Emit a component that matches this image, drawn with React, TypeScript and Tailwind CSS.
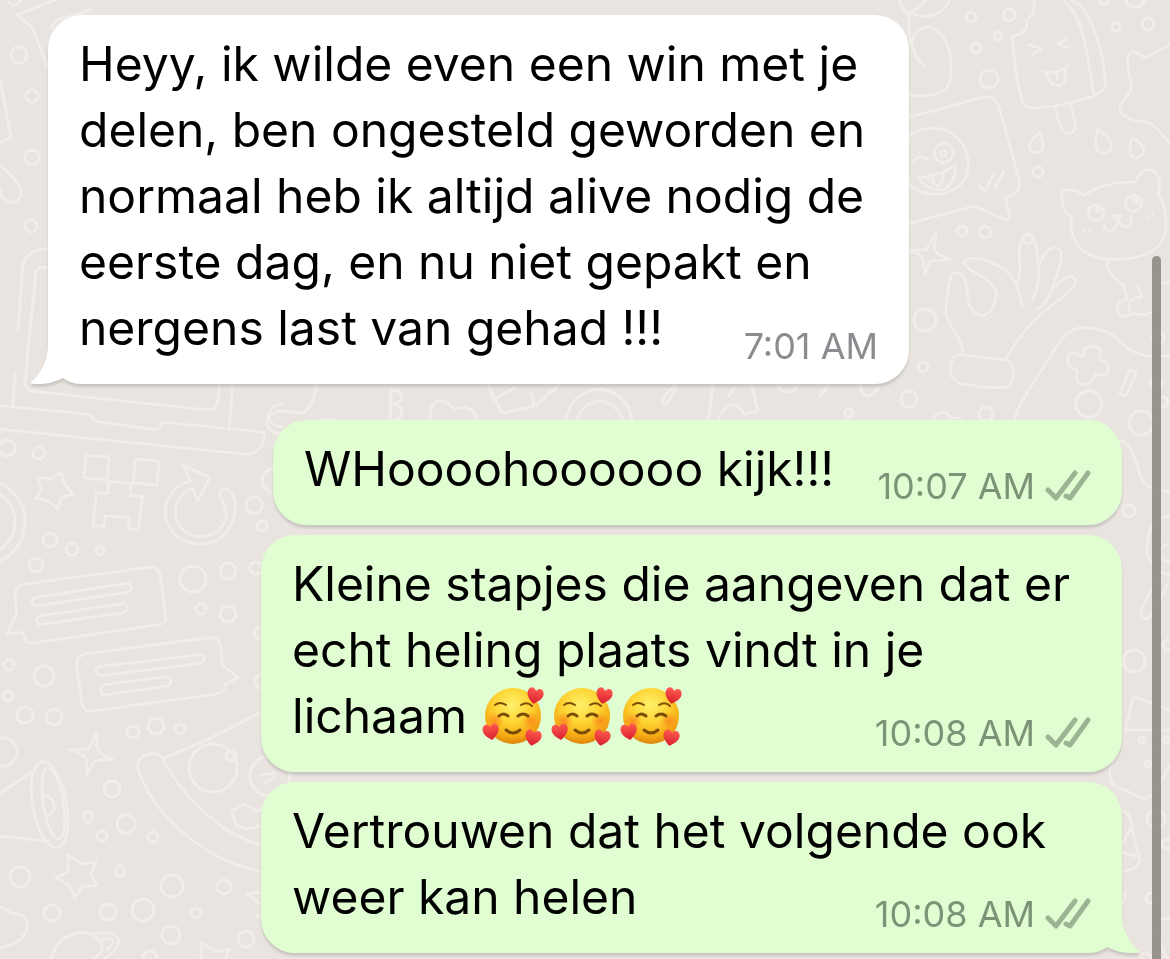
import React from 'react';

type Status = 'sent' | 'received';

interface Message {
  id: number;
  lines: string[];
  time: string;
  status: Status;
  emojis?: number;
  short?: boolean;
  tail?: boolean;
}

const received: Message[] = [
  {
    id: 1,
    lines: [
      'Heyy, ik wilde even een win met je',
      'delen, ben ongesteld geworden en',
      'normaal heb ik altijd alive nodig de',
      'eerste dag, en nu niet gepakt en',
      'nergens last van gehad !!!',
    ],
    time: '7:01 AM',
    status: 'received',
    tail: true,
  },
];

const sent: Message[] = [
  { id: 2, lines: ['WHoooohoooooo kijk!!!'], time: '10:07 AM', status: 'sent', short: true },
  {
    id: 3,
    lines: ['Kleine stapjes die aangeven dat er', 'echt heling plaats vindt in je', 'lichaam'],
    time: '10:08 AM',
    status: 'sent',
    emojis: 3,
  },
  {
    id: 4,
    lines: ['Vertrouwen dat het volgende ook', 'weer kan helen'],
    time: '10:08 AM',
    status: 'sent',
    tail: true,
  },
];

// x, y, radius
const dots = [
  [971, 17, 5], [1009, 15, 6], [998, 36, 4], [976, 48, 5], [989, 79, 9], [1116, 27, 4], [1148, 24, 6],
  [1038, 172, 5], [962, 231, 5], [985, 232, 6], [1104, -2, 6], [1135, -3, 10], [1028, 239, 5],
  [925, 320, 11], [923, 367, 5], [909, 399, 8], [986, 414, 7], [1089, 404, 13], [1141, 423, 12],
  [1158, 338, 6], [1156, 383, 6], [1163, 402, 5], [7, 448, 8], [39, 453, 6], [50, 540, 7], [72, 549, 6],
  [100, 551, 4], [36, 565, 7], [254, 505, 8], [262, 526, 5], [193, 579, 13], [228, 571, 8], [256, 568, 6],
  [201, 609, 5], [228, 614, 8], [9, 665, 5], [44, 676, 10], [8, 696, 5], [25, 715, 8], [54, 717, 8],
  [133, 732, 6], [156, 726, 8], [180, 729, 5], [260, 633, 6], [262, 682, 7], [3, 752, 14], [112, 789, 8],
  [88, 817, 5], [126, 824, 9], [102, 836, 5], [153, 837, 5], [20, 877, 10], [120, 871, 5], [172, 886, 11],
  [224, 887, 7], [52, 913, 8], [108, 912, 8], [143, 910, 11], [196, 913, 5], [171, 935, 9], [246, 939, 8],
  [150, 958, 7], [213, 768, 24], [231, 756, 5], [270, 776, 20], [19, 55, 8], [32, 96, 6], [32, 157, 7],
  [31, 226, 6], [14, -1, 6], [1156, 819, 9], [1167, 844, 5], [1151, 898, 5], [1146, 958, 5], [1129, 511, 6],
  [1134, 661, 11], [1168, 645, 5], [1142, 740, 3], [1148, 764, 3], [1156, 747, 3], [1166, 740, 3],
  [-18, 522, 43], [-18, 522, 33],
];

const Wallpaper: React.FC = () => (
  <svg
    aria-hidden="true"
    className="absolute left-0 top-0 pointer-events-none"
    width="1170"
    height="959"
    viewBox="0 0 1170 959"
    fill="none"
    stroke="#f1ede9"
    strokeWidth="3"
    strokeLinecap="round"
    strokeLinejoin="round"
  >
    {dots.map(([x, y, r]) => (
      <circle key={`${x}-${y}-${r}`} cx={x} cy={y} r={r} />
    ))}

    {/* ice lolly, phone, droplets, cat */}
    <g transform="translate(900 0) scale(0.33333)" strokeWidth="8">
      <path d="M20 40 C5 20 -5 0 -5 -10 M20 40 C50 30 75 10 82 -5 M35 38 C70 60 130 50 152 -5 M28 42 C22 80 30 170 76 200" />
      <path d="M35 130 C45 75 95 70 125 105 C155 145 155 190 152 235 C145 285 90 292 20 285" />
      <path d="M400 -5 C407 25 402 50 378 60 C388 80 372 105 338 108 C340 180 352 250 365 300 C370 320 385 324 400 324 L465 318 C510 308 550 300 580 288 C610 276 620 262 615 235 C608 150 580 60 540 15 L500 -8 M485 -5 C530 30 545 85 555 135 C568 190 574 240 580 278" />
      <path d="M465 320 C472 350 477 372 485 388 C495 405 525 405 526 380 C524 355 518 335 512 314" />
      <path d="M388 134 L424 148 L396 164 M500 116 L474 132 L504 142 M430 214 C455 220 485 215 504 198 M441 218 C445 245 458 258 475 257 C495 255 500 230 494 208 M469 219 L472 236" />
      <path d="M420 396 C400 415 387 425 388 442 C395 465 430 460 430 440 Z M593 388 C588 410 584 425 588 445 C598 468 635 462 635 435 C632 415 610 398 593 388 Z M696 414 C690 435 684 455 695 468 C710 482 735 468 731 450 C726 432 710 420 696 414 Z" />
      <path d="M20 354 L240 294 C270 285 285 292 295 315 L358 540 C362 570 345 585 315 592 L330 650 C325 662 320 662 310 658 L224 618 L20 672" />
      <path d="M20 415 C60 375 130 375 170 410 C220 460 215 535 165 567 C120 592 60 590 20 545 M40 492 C45 470 65 465 82 478 M55 535 C95 530 135 515 167 498 C170 530 150 568 118 570 C90 568 70 555 55 535 Z M82 532 L98 546 M98 530 C102 570 130 565 130 518 M236 558 L256 572 L282 522 M285 566 L310 515" />
      <circle cx="131" cy="459" r="28" />
      <circle cx="131" cy="459" r="8" />
      <path d="M815 130 L740 172 C715 170 710 150 690 157 C675 175 685 210 693 245 C700 285 665 290 659 325 C670 365 715 360 750 370 C780 385 795 415 815 440" />
      <path d="M515 650 C485 635 480 590 490 573 C510 565 535 572 553 586 C590 560 645 545 706 546 C720 510 745 500 765 515 C785 535 780 560 774 585 C800 615 805 680 790 715 C765 775 680 780 620 778 C540 770 505 715 515 650" />
      <circle cx="588" cy="638" r="23" />
      <circle cx="701" cy="610" r="24" />
      <circle cx="594" cy="630" r="6" />
      <circle cx="706" cy="603" r="6" />
      <path d="M638 650 L664 644 L653 662 Z M653 662 C650 700 615 700 612 676 M655 662 C670 695 705 675 694 648 M549 693 L552 693 M570 693 L572 693 M740 655 L742 655 M756 643 L758 643" />
    </g>

    {/* sparkle, ok hand, cuff, gamepad */}
    <g transform="translate(900 220) scale(0.33333)" strokeWidth="8">
      <path d="M108 38 L102 90 C115 108 135 112 154 119 L98 122 C85 130 80 145 75 162 L68 115 C60 100 48 100 30 92 L80 88 Z M20 14 L80 -4" />
      <path d="M190 402 C180 335 145 325 138 280 C138 240 145 195 155 163 C170 152 190 160 198 188 C205 225 200 255 222 275 C245 298 275 280 283 250 C292 225 293 210 275 195 C250 160 205 160 192 128 C200 105 250 115 290 135 C345 160 355 205 366 255" />
      <path d="M348 195 C372 160 350 110 362 65 C375 35 402 42 408 75 C420 140 420 190 398 240 M415 135 C440 85 460 70 482 92 C490 130 470 160 455 208 C440 245 430 255 412 270 M455 208 C490 175 515 155 528 180 C525 210 480 235 430 275 C385 320 350 355 320 415" />
      <path d="M180 404 L320 420 C350 435 340 475 330 500 C285 508 230 500 180 490 C140 470 150 445 157 420 C160 408 170 404 180 404 Z" />
      <path d="M345 600 C350 550 410 480 450 410 C485 350 510 322 550 323 C600 325 635 335 660 365 C700 405 750 418 815 405 M100 595 C115 570 145 575 150 595 C165 590 175 592 185 600" />
      <path d="M555 388 C570 370 600 380 604 395 L598 420 C630 425 632 445 618 465 L585 463 C578 500 540 500 530 480 L532 450 C505 445 495 430 508 400 C525 395 540 405 550 408 Z" />
      <path d="M690 450 L709 456 L678 528 L659 520 Z M620 120 C622 160 650 185 670 195 L682 240 M712 192 L724 232 C685 230 680 265 695 280 C725 287 760 285 772 260 C780 230 770 200 768 165 M682 238 C645 240 640 285 675 290 L695 284 M780 190 L815 185" />
    </g>

    {/* laptop base, star, creeper, reload arrow */}
    <g transform="translate(0 380) scale(0.33333)" strokeWidth="8">
      <path d="M75 -20 C72 20 80 33 100 34 L625 90 C650 92 655 70 658 20 M-5 76 L275 104 C280 125 290 127 310 128 L460 148 C480 150 482 145 484 126 L794 157 C794 195 775 225 730 222 L-5 147 M38 75 L46 -20 M698 20 L688 142" />
      <path d="M185 278 L192 312 L220 342 L185 352 L173 386 L145 362 L108 354 L124 328 L114 293 L150 297 Z" />
      <path d="M258 227 L327 230 L322 300 L250 293 Z M406 237 L478 244 L470 316 L400 308 Z M327 304 L393 311 L390 346 L428 350 L415 448 L383 446 L388 413 L315 408 L312 440 L278 437 L290 338 L322 341 Z" />
      <path d="M571 302 C510 320 480 380 503 430 C530 500 635 515 680 455 C715 405 712 360 690 335 C675 320 655 330 660 350 C685 390 685 425 655 450 C615 485 550 470 532 425 C515 380 535 340 578 325 L592 364 L630 293 L550 256 Z" />
      <path d="M845 72 C810 75 795 110 810 125 C820 135 830 140 845 140 M845 262 C810 262 780 280 788 310 C795 335 820 340 845 345" />
    </g>

    {/* chat boxes */}
    <g transform="translate(0 560) scale(0.33333)" strokeWidth="8">
      <path d="M75 72 L445 22 C465 18 475 25 480 45 L497 165 C500 185 490 192 475 194 L95 250 C75 250 75 235 70 218 L22 220 L50 162 L45 110 C45 85 55 75 75 72 Z" />
      <path d="M108 112 L380 70 C398 70 398 92 380 97 L108 138 C92 138 92 115 108 112 Z M120 168 L370 130 C386 132 385 155 370 158 L120 194 C107 190 108 171 120 168 Z" />
      <path d="M265 280 L635 232 C655 230 665 250 667 315 L715 353 L675 373 C675 390 665 400 650 402 L270 454 C250 455 245 435 242 400 L230 315 C230 290 245 283 265 280 Z" />
      <path d="M298 320 L600 284 C618 287 615 305 600 310 L300 347 C284 343 285 324 298 320 Z M310 375 L500 350 C518 352 515 375 500 378 L312 405 C298 400 300 380 310 375 Z" />
    </g>

    {/* megaphone, sparkle, pizza slice, star, planet */}
    <g transform="translate(0 740) scale(0.33333)" strokeWidth="8">
      <path d="M290 -22 L290 22 C300 45 320 50 338 57 L290 62 C275 70 268 85 262 105 L258 55 C245 40 228 35 210 28 L265 28 Z" />
      <ellipse cx="149" cy="194" rx="51" ry="131" transform="rotate(-10 149 194)" />
      <ellipse cx="160" cy="190" rx="30" ry="108" transform="rotate(-9 160 190)" />
      <path d="M-5 162 L95 98 M-5 288 L145 304 M135 168 C170 170 172 220 140 225" />
      <path d="M415 90 C400 45 470 25 488 55 C535 150 650 280 785 316 M415 90 C455 210 600 360 785 395 M490 55 L620 0 L785 -85" />
      <path d="M788 205 C765 225 760 200 730 193 C715 198 715 212 695 210 L708 255 C730 268 755 270 785 255 M780 105 L825 100 M795 130 L825 110" />
      <path d="M203 344 L245 372 L288 365 L272 405 L292 437 L250 438 L224 472 L207 435 L167 413 L205 395 Z" />
      <path d="M-5 500 C20 500 30 525 50 522 C80 525 90 555 75 580 C60 605 30 620 -5 625 M150 665 C165 595 220 570 270 580 L330 578 C360 585 362 610 345 630 L305 665 M270 580 C305 600 315 620 300 640 L270 665 M305 600 C345 590 350 605 320 630" />
      <path d="M601 665 L606 607 L645 635 L688 627 L672 665 M785 458 L740 460 L780 490 M785 525 L768 530" />
    </g>

    {/* left edge above the laptop */}
    <g strokeWidth="3">
      <path d="M48 68 L32 27 L17 15 L60 -2 M52 28 C54 20 60 18 66 18 L90 10 M0 80 L11 138 L0 142 M0 165 C12 175 22 185 21 196 C15 208 2 202 0 190 M18 330 L23 265 C25 253 35 249 50 249 M30 330 L36 272 C38 267 42 267 50 268 M25 384 L30 330" />
    </g>

    {/* strip between the first two messages */}
    <g strokeWidth="3">
      <path d="M316 386 C314 400 309 412 300 413 C290 413 280 408 272 414 C262 422 266 430 280 434 M316 424 C322 417 335 417 352 428 M390 428 L391 390 C405 390 406 402 394 404 C406 407 404 420 391 421 M432 428 C424 402 442 392 454 410 C466 404 480 408 475 428" />
      <path d="M488 386 L502 413 L535 406 L558 386 M492 400 L516 387 M531 394 L534 404 M565 428 C567 378 626 378 632 420 L640 426 M575 428 C580 392 620 392 624 428" />
      <path d="M674 386 C656 402 662 412 672 396 L676 386 M713 386 L708 422 L718 421 C724 402 738 400 744 414 L758 411 L752 386 M729 396 L734 388 M778 386 C782 396 796 392 797 386 M820 396 L828 386 M860 386 C864 402 872 396 878 388" />
      <circle cx="849" cy="413" r="4" />
    </g>

    {/* right edge beside the sent messages */}
    <g transform="translate(1100 410) scale(0.33333)" strokeWidth="8">
      <path d="M60 92 C100 100 105 150 120 195 C135 235 170 240 210 245 M215 318 C165 320 140 355 142 420 C145 465 175 490 210 495 M178 430 C190 400 205 400 215 402 M178 430 C180 450 200 455 215 455 M175 498 L123 600 C120 625 140 635 152 615 L205 520" />
      <path d="M75 965 L100 858 L215 902 M75 960 L215 960 M40 1050 C20 1090 30 1120 50 1130 L130 1165 C160 1170 180 1110 215 1060 M65 1205 C95 1205 93 1240 97 1260 L118 1345 C120 1370 105 1376 66 1386 M66 1305 L92 1255 M66 1325 L112 1340 M66 1450 L78 1455 L66 1480" />
      <path d="M215 1530 C170 1510 165 1560 180 1590 C190 1630 200 1650 215 1650" />
    </g>
  </svg>
);

const Heart: React.FC<{ x: number; y: number; angle: number }> = ({ x, y, angle }) => (
  <path
    d="M0 8 C-4 5 -9 1 -8 -4 C-7 -9 -2 -9 0 -5 C2 -9 7 -9 8 -4 C9 1 4 5 0 8 Z"
    fill="url(#heart)"
    transform={`translate(${x} ${y}) rotate(${angle})`}
  />
);

const LoveFace: React.FC = () => (
  <svg viewBox="0 0 64 64" className="w-16 h-16 shrink-0" role="img" aria-label="smiling face with hearts">
    <defs>
      <radialGradient id="face" cx="0.48" cy="0.3" r="0.7">
        <stop offset="0" stopColor="#fff06a" />
        <stop offset="0.45" stopColor="#fdd535" />
        <stop offset="0.8" stopColor="#f6ac14" />
        <stop offset="1" stopColor="#dd840c" />
      </radialGradient>
      <radialGradient id="blush">
        <stop offset="0" stopColor="#fb741c" stopOpacity="0.65" />
        <stop offset="1" stopColor="#fb741c" stopOpacity="0" />
      </radialGradient>
      <linearGradient id="heart" x1="0" y1="0" x2="0" y2="1">
        <stop offset="0" stopColor="#ff5a50" />
        <stop offset="1" stopColor="#d81f2e" />
      </linearGradient>
    </defs>
    <circle cx="32" cy="32" r="28" fill="url(#face)" />
    <circle cx="14" cy="37" r="9" fill="url(#blush)" />
    <circle cx="50" cy="37" r="9" fill="url(#blush)" />
    <g fill="none" stroke="#7d4d08" strokeLinecap="round">
      <path d="M14 21 Q19 17 25 21 M40 21 Q46 17 51 22" strokeWidth="2" />
      <path d="M18 32 Q22 28 27 32 M37 32 Q42 28 47 32" strokeWidth="3" />
      <path d="M25 46 Q32 52 39 46" strokeWidth="3" />
    </g>
    <Heart x={54} y={12} angle={12} />
    <Heart x={10} y={48} angle={-8} />
    <Heart x={52} y={54} angle={12} />
  </svg>
);

const Ticks: React.FC = () => (
  <svg
    viewBox="0 0 46 32"
    className="w-[46px] h-8"
    fill="none"
    stroke="#9cb493"
    strokeWidth="5"
    strokeLinecap="round"
    strokeLinejoin="round"
    role="img"
    aria-label="Delivered"
  >
    <path d="M3 20 L11 28 L30 3 M21 26 L25 28 L43 3" />
  </svg>
);

const Tail: React.FC<{ status: Status }> = ({ status }) => (
  <svg
    aria-hidden="true"
    viewBox="0 0 40 40"
    className={
      status === 'received'
        ? 'absolute bottom-0 -left-[18px] w-10 h-10 text-white'
        : 'absolute bottom-0 -right-[18px] w-10 h-10 -scale-x-100 text-[#e0fed2]'
    }
  >
    <path d="M18 0 C18 16 11 31 0 39 C12 42 25 38 33 34 L40 16 Z" fill="currentColor" />
  </svg>
);

const Bubble: React.FC<{ message: Message }> = ({ message }) => {
  const { lines, time, status, emojis = 0, short, tail } = message;
  const color = status === 'sent' ? 'bg-[#e0fed2]' : 'bg-white';
  const layout = short ? 'max-w-[849px] flex justify-between' : 'max-w-[861px] grid';

  return (
    <article
      className={`relative w-full rounded-[34px] px-[31px] pt-4 pb-[23px] drop-shadow-[0_3px_1px_rgba(0,0,0,0.13)] ${color} ${layout} ${
        status === 'sent' ? 'self-end' : ''
      }`}
    >
      {tail && <Tail status={status} />}
      <p className="col-start-1 row-start-1 text-[48px] leading-[66px] text-black whitespace-nowrap">
        {lines.map((line, i) => (
          <span key={line} className="flex items-center h-[66px]">
            {line}
            {i === lines.length - 1 && emojis > 0 && (
              <span className="flex gap-[5px] ml-3.5">
                {Array.from({ length: emojis }, (_, n) => (
                  <LoveFace key={n} />
                ))}
              </span>
            )}
          </span>
        ))}
      </p>
      <div
        className={`col-start-1 row-start-1 self-end justify-self-end flex items-center gap-2.5 text-[36px] leading-[30px] whitespace-nowrap ${
          status === 'sent' ? 'text-[#7c9377]' : 'text-[#8c8c90]'
        }`}
      >
        <time>{time}</time>
        {status === 'sent' && <Ticks />}
      </div>
    </article>
  );
};

export default function App() {
  return (
    <main className="relative min-h-screen overflow-hidden bg-[#e9e4df] font-['Inter','Liberation_Sans',sans-serif]">
      <Wallpaper />
      <div className="relative flex flex-col gap-9 px-12 pt-[15px] pb-1">
        <section className="flex flex-col">
          {received.map((message) => (
            <Bubble key={message.id} message={message} />
          ))}
        </section>
        <section className="flex flex-col gap-2.5">
          {sent.map((message) => (
            <Bubble key={message.id} message={message} />
          ))}
        </section>
      </div>
      {/* scroll thumb */}
      <div className="absolute top-64 bottom-0 right-[9px] w-[9px] rounded-t-full bg-[#8e8984]/90" />
    </main>
  );
}
